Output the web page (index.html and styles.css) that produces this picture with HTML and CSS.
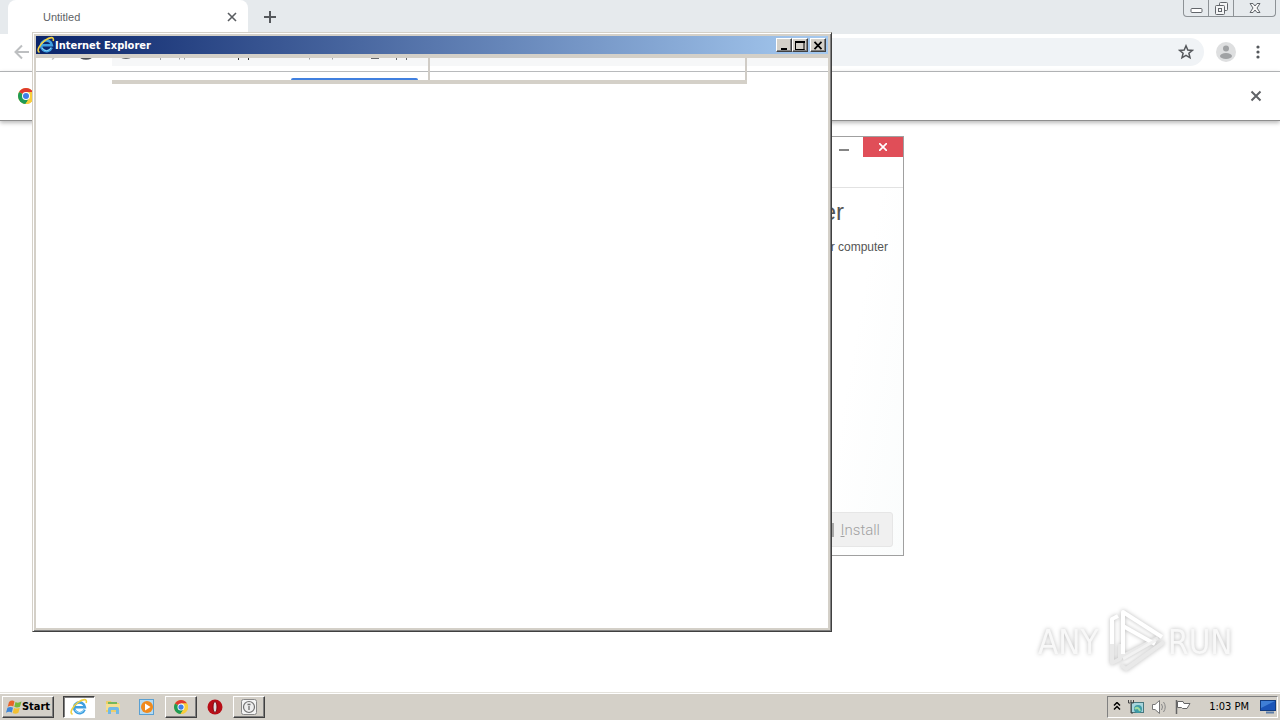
FILE: index.html
```html
<!DOCTYPE html>
<html lang="en">
<head>
<meta charset="utf-8">
<title>Desktop</title>
<link rel="stylesheet" href="styles.css">
</head>
<body>
<svg class="defs" aria-hidden="true">
  <symbol id="chrome" viewBox="0 0 16 16">
    <circle cx="8" cy="8" r="8" fill="#f8ce3c"/>
    <path d="M8 8L1.1 4A8 8 0 0 1 14.9 4H8Z" fill="#df3a30"/>
    <path d="M1.1 4A8 8 0 0 0 7.5 16L11.4 10L8 8Z" fill="#1e9b55"/>
    <path d="M8 4H14.9A8 8 0 0 1 7.5 16L11.4 10Z" fill="#f8ce3c"/>
    <circle cx="8" cy="8" r="4" fill="#fff"/>
    <circle cx="8" cy="8" r="3" fill="#3f7fe8"/>
  </symbol>
  <symbol id="ie" viewBox="0 0 18 18">
    <path d="M14.6 11.6A5.400 5.400 0 1 1 14.9 9.300H4.800" fill="none" stroke="#3f9fe0" stroke-width="2.600"/>
    <path d="M14 11.8A5 5 0 0 1 5 12" fill="none" stroke="#8cd2f6" stroke-width="1"/>
    <path d="M2.600 16.200C-1 15.500 2.200 8.500 8 4.300C12.500 1 17.600.2 16.200 5" fill="none" stroke="#f0d040" stroke-width="1.600"/>
  </symbol>
</svg>

<main class="desktop">
  <section class="browser">
    <header class="tabstrip">
      <div class="tab">
        <span class="tab-title">Untitled</span>
        <button class="plain tab-close" aria-label="Close tab"><svg width="10" height="10" viewBox="0 0 10 10"><path d="M1 1L9 9M9 1L1 9" stroke="#5a5d61" stroke-width="1.6"/></svg></button>
      </div>
      <button class="plain new-tab" aria-label="New tab"><svg width="12" height="12" viewBox="0 0 12 12"><path d="M6 0V12M0 6H12" stroke="#55585c" stroke-width="2"/></svg></button>
      <div class="caption">
        <button class="cap" aria-label="Minimize"><svg width="13" height="17" viewBox="0 0 13 17"><rect x="1" y="8.500" width="11" height="4" rx="1" fill="#fff" stroke="#62666b"/></svg></button>
        <button class="cap" aria-label="Restore"><svg width="13" height="17" viewBox="0 0 13 17"><g fill="#f4f5f6" stroke="#62666b"><rect x="4.500" y="2.500" width="8" height="8" rx="1"/><rect x=".5" y="5.500" width="9" height="9" rx="1"/><rect x="3.500" y="8.500" width="3" height="3"/></g></svg></button>
        <button class="cap cap-close" aria-label="Close"><svg width="12" height="17" viewBox="0 0 12 17"><path d="M1 3.500H4L6 6L8 3.500H11L8 8L11 12.500H8L6 10L4 12.500H1L4 8Z" fill="#f8f8f8" stroke="#62666b"/></svg></button>
      </div>
    </header>
    <div class="toolbar">
      <button class="plain" aria-label="Back"><svg width="16" height="16" viewBox="0 0 16 16"><path d="M15 8H2M8 1.500L1.500 8L8 14.500" fill="none" stroke="#bdbfc1" stroke-width="2"/></svg></button>
      <div class="omnibox">
        <button class="plain" aria-label="Bookmark"><svg width="16" height="16" viewBox="0 0 16 16"><path d="M8 1.800L9.800 6L14.300 6.400L10.900 9.300L12 13.800L8 11.400L4 13.800L5.100 9.300L1.700 6.400L6.200 6Z" fill="none" stroke="#55585c" stroke-width="1.500"/></svg></button>
      </div>
      <button class="plain" aria-label="Profile"><svg width="20" height="20" viewBox="0 0 20 20"><circle cx="10" cy="10" r="10" fill="#dedfe0"/><circle cx="10" cy="6.500" r="3" fill="#a0a2a4"/><ellipse cx="10" cy="14" rx="6" ry="3" fill="#a0a2a4"/></svg></button>
      <button class="plain menu" aria-label="Menu"><svg width="4" height="14" viewBox="0 0 4 14"><g fill="#55585c"><circle cx="2" cy="2" r="1.600"/><circle cx="2" cy="7" r="1.600"/><circle cx="2" cy="12" r="1.600"/></g></svg></button>
    </div>
    <div class="infobar">
      <svg width="16" height="16"><use href="#chrome"/></svg>
      <button class="plain" aria-label="Dismiss"><svg width="12" height="12" viewBox="0 0 12 12"><path d="M1.500 1.500L10.500 10.500M10.500 1.500L1.500 10.500" stroke="#606367" stroke-width="2"/></svg></button>
    </div>
  </section>

  <section class="installer">
    <header class="inst-bar">
      <button class="plain inst-min" aria-label="Minimize"><svg width="10" height="3"><rect y="0" width="10" height="2" fill="#858585"/></svg></button>
      <button class="plain inst-close" aria-label="Close"><svg width="8" height="8" viewBox="0 0 8 8"><path d="M0 0L8 8M8 0L0 8" stroke="#fff" stroke-width="1.700"/></svg></button>
    </header>
    <div class="inst-body">
      <h1 class="inst-title">er</h1>
      <p class="inst-text">r computer</p>
      <button class="install"><span class="shield"></span><span><u>I</u>nstall</span></button>
    </div>
  </section>

  <section class="ie">
    <header class="ie-title">
      <svg class="ie-icon" width="18" height="18"><use href="#ie"/></svg>
      <h2 class="ie-name">Internet Explorer</h2>
      <div class="ie-buttons">
        <button class="classic" aria-label="Minimize"><svg width="10" height="9"><path d="M2 8H8" stroke="#000" stroke-width="2"/></svg></button>
        <button class="classic" aria-label="Maximize"><svg width="10" height="9"><path d="M.5 1H9.500M.5 8.500H9.500M.5 0V9M9 0V9" stroke="#000" stroke-width="1"/><path d="M0 1H10" stroke="#000" stroke-width="2"/></svg></button>
        <button class="classic ie-close" aria-label="Close"><svg width="10" height="9"><path d="M1.500 .8L8.500 8.200M8.500 .8L1.500 8.200" stroke="#000" stroke-width="1.700"/></svg></button>
      </div>
    </header>
    <div class="ie-page">
      <div class="remnant-bar">
        <svg class="remnant-marks" width="430" height="4" viewBox="36 58 430 4">
          <path d="M52 59.500L54 58" stroke="#c4c4c4" stroke-width="1.500"/>
          <path d="M81 57.500Q86 60 91 57.500" fill="none" stroke="#4d5054" stroke-width="2"/>
          <path d="M122 57.500Q126 59 130 57.500" fill="none" stroke="#6a6d70" stroke-width="1.500"/>
          <path d="M160.500 58V60M179.500 58V59.500M184.500 58V59.500M309.500 58V59.500M332.500 58V59.500" stroke="#a0a2a5"/>
          <path d="M238.500 58V60M248.500 58V60" stroke="#333"/>
          <path d="M371 58.500H379M396.500 58V60M406.500 58V60" stroke="#66686c"/>
        </svg>
      </div>
      <div class="remnant-panes">
        <div class="pane pane-left"><span class="blue"></span></div>
        <div class="pane"></div>
      </div>
    </div>
  </section>

  <svg class="watermark" width="206" height="70" viewBox="0 0 206 70" role="img" aria-label="ANY RUN">
    <g fill="none" stroke-linejoin="round">
      <path d="M80 38V59L88 55V40M91 40V52L126 34M89 61L94 65L132 38" stroke="#e9e9e9" stroke-width="4"/>
      <path d="M80 40V15L86 12M91 50V8L130 33M91 22L123 40" stroke="#fff" stroke-width="4"/>
      <path d="M91 55L124 36" stroke="#f2f2f2" stroke-width="3"/>
    </g>
    <g class="mark-text"><text x="6" y="50">ANY</text><text x="136" y="50">RUN</text></g>
  </svg>
</main>

<footer class="taskbar">
  <button class="task start"><svg width="16" height="16" viewBox="0 0 16 16"><path d="M3 3Q6 .5 8.500 2.500L7.300 7.500Q5 6 1.700 7.700Z" fill="#e8642a"/><path d="M9.500 3Q12 4.500 15.500 2.500L14 7.700Q11 9 8.300 7.800Z" fill="#75b83c"/><path d="M1.400 8.800Q4.500 7.200 7 8.700L5.800 13.500Q3 12 0 13.700Z" fill="#3d86d8"/><path d="M8 9Q11 10.300 13.800 8.800L12.400 13.800Q9.500 15.500 6.700 14Z" fill="#f2c033"/></svg><span>Start</span></button>
  <nav class="tasks">
    <button class="task active" aria-label="Internet Explorer"><svg width="18" height="18"><use href="#ie"/></svg></button>
    <button class="task flat" aria-label="Explorer"><svg width="18" height="18" viewBox="0 0 18 18"><path d="M2 3H7L8 5H15V14H2Z" fill="#edce68"/><path d="M4 4H13V7H4Z" fill="#74b75b"/><path d="M2 6H16V12H2Z" fill="#f5df91"/><path d="M4 16V11Q4 9 6 9H13Q15 9 15 11V16H12V12H7V16Z" fill="#70b9e7"/></svg></button>
    <button class="task flat" aria-label="Media Player"><svg width="18" height="18" viewBox="0 0 18 18"><rect x="1.500" y="1.500" width="14" height="15" fill="#b5dbf2" stroke="#5aa0d2"/><circle cx="9" cy="9" r="6" fill="#f08a1d"/><path d="M7 5.500L12.500 9L7 12.500Z" fill="#fff"/></svg></button>
    <button class="task" aria-label="Chrome"><svg width="14" height="14"><use href="#chrome"/></svg></button>
    <button class="task flat" aria-label="Opera"><svg width="16" height="16" viewBox="0 0 16 16"><circle cx="8" cy="8" r="7.500" fill="#b80e17"/><ellipse cx="8" cy="8" rx="2" ry="5.500" fill="#ddd" stroke="#7e080f"/></svg></button>
    <button class="task" aria-label="Installer"><svg width="16" height="16" viewBox="0 0 16 16"><rect x=".5" y=".5" width="15" height="15" rx="2" fill="#f4f4f4" stroke="#888"/><circle cx="8" cy="8" r="5.500" fill="#eee" stroke="#707070" stroke-width="1.200"/><path d="M8 7V11M6.500 5.500H9.500" stroke="#707070" stroke-width="1.300"/></svg></button>
  </nav>
  <div class="tray">
    <svg width="8" height="10" viewBox="0 0 8 10"><path d="M1 3.500L4 .5L7 3.500M1 7.500L4 4.500L7 7.500" fill="none" stroke="#000" stroke-width="1.500"/></svg>
    <svg width="18" height="16" viewBox="0 0 18 16"><rect x="4.500" y="3.500" width="12" height="10" fill="#a7d5dd" stroke="#47777e"/><circle cx="11" cy="10" r="4" fill="#3f9ba6"/><path d="M8 10Q11 7 13 12" stroke="#9ddca0" fill="none" stroke-width="2"/><path d="M1.500 1V4H6.500V1M4 1V4M4 5V14H6" fill="none" stroke="#454545"/></svg>
    <svg width="18" height="16" viewBox="0 0 18 16"><path d="M1.500 5.500H4L8.500 1.500V14.500L4 10.500H1.500Z" fill="#fff" stroke="#777"/><path d="M10.500 5Q12.500 8 10.500 11M12.500 3Q16 8 12.500 13" fill="none" stroke="#888"/></svg>
    <svg width="16" height="16" viewBox="0 0 16 16"><path d="M1.500 1V15" stroke="#666" stroke-width="1.500"/><path d="M2.500 2.500H8L9 4.500H15L12 9.500H7.500L6.500 8.500H2.500Z" fill="#fff" stroke="#666"/></svg>
    <time class="clock">1:03 PM</time>
    <svg width="16" height="14" viewBox="0 0 16 14"><rect x=".5" y=".5" width="15" height="10" fill="#1b55b8" stroke="#123c80"/><path d="M1 1H15L1 8Z" fill="#3f7fd6"/><path d="M6 12.500H14" stroke="#5b7ca8" stroke-width="2"/></svg>
  </div>
</footer>
</body>
</html>
```

FILE: styles.css
```css
* { box-sizing: border-box; }
body {
  margin: 0;
  height: 100vh;
  display: flex;
  flex-direction: column;
  overflow: hidden;
  background: #fff;
  font-family: "DejaVu Sans Condensed", "DejaVu Sans", sans-serif;
  font-size: 11px;
}
.defs { position: absolute; width: 0; height: 0; }
svg { display: block; flex: none; }
h1, h2, p { margin: 0; font-weight: normal; }
button { font: inherit; color: inherit; padding: 0; }
.plain { border: 0; background: none; display: flex; align-items: center; justify-content: center; }

.desktop { position: relative; flex: 1; min-height: 0; }

.tabstrip { display: flex; align-items: center; height: 34px; padding-left: 8px; background: #e6eaed; }
.tab {
  width: 240px;
  height: 34px;
  padding: 0 11px 0 35px;
  display: flex;
  align-items: center;
  justify-content: space-between;
  background: #fff;
  border-radius: 8px 8px 0 0;
  color: #606366;
  font-family: "Liberation Sans", Arial, sans-serif;
}
.new-tab { width: 24px; height: 24px; margin-left: 10px; }
.caption {
  display: flex;
  align-self: flex-start;
  height: 17px;
  margin: 0 4px 0 auto;
  border: 1px solid #8d9296;
  border-top: 0;
  border-radius: 0 0 4px 4px;
}
.cap { width: 25px; border: 0; border-right: 1px solid #8d9296; background: none; display: flex; justify-content: center; }
.cap-close { width: 41px; border-right: 0; }

.toolbar { display: flex; align-items: center; height: 37px; padding: 0 20px 2px 14px; gap: 12px; }
.omnibox {
  flex: 1;
  height: 28px;
  margin-left: 70px;
  padding-right: 10px;
  border-radius: 14px;
  background: #f0f3f6;
  display: flex;
  align-items: center;
  justify-content: flex-end;
}
.menu { margin-left: 8px; }
.infobar {
  display: flex;
  align-items: center;
  justify-content: space-between;
  height: 50px;
  padding: 0 18px;
  border-top: 1px solid #b0b2b4;
  border-bottom: 1px solid #8e8e8e;
  box-shadow: 0 2px 4px #bbb;
}

.installer {
  position: absolute;
  left: 604px;
  top: 136px;
  width: 300px;
  height: 420px;
  display: flex;
  flex-direction: column;
  border: 1px solid #a0a0a0;
  background: #fff;
  font-family: "Liberation Sans", Arial, sans-serif;
  color: #555;
}
.inst-bar { display: flex; justify-content: flex-end; height: 51px; border-bottom: 1px solid #e2e2e2; }
.inst-min { height: 26px; padding-right: 14px; }
.inst-close { width: 40px; height: 20px; background: #e04e58; }
.inst-body {
  flex: 1;
  display: flex;
  flex-direction: column;
  align-items: flex-end;
  padding: 10px 10px 8px;
  background: linear-gradient(100deg, #fff 76%, #fafcfc);
}
.inst-title { padding-right: 49px; font-size: 24px; line-height: 28px; }
.inst-text { padding: 13px 5px 0 0; font-size: 12px; line-height: 16px; }
.install {
  width: 120px;
  height: 35px;
  margin-top: auto;
  padding-right: 12px;
  display: flex;
  align-items: center;
  justify-content: flex-end;
  gap: 7px;
  border: 1px solid #e6e6e6;
  border-radius: 3px;
  background: #f0f0f0;
  color: #a0a0a0;
  font: 300 15px Roboto, sans-serif;
}
.shield { width: 14px; height: 14px; border: 2px solid #a8a8a8; }

.ie {
  position: absolute;
  left: 32px;
  top: 32px;
  width: 800px;
  height: 600px;
  display: flex;
  flex-direction: column;
  padding: 2px;
  border: 1px solid;
  border-color: #d4d0c8 #404040 #404040 #d4d0c8;
  box-shadow: inset 1px 1px #fff, inset -1px -1px #808080;
  background: #d4d0c8;
}
.ie-title {
  display: flex;
  align-items: center;
  height: 18px;
  margin: 1px 1px 0;
  padding: 0 2px 0 1px;
  background: linear-gradient(90deg, #0a246a, #a6caf0);
}
.ie-name { color: #fff; font-weight: bold; font-size: 11px; }
.ie-buttons { display: flex; margin-left: auto; }
.classic {
  width: 16px;
  height: 14px;
  display: flex;
  align-items: center;
  justify-content: center;
  border: 1px solid;
  border-color: #fff #404040 #404040 #fff;
  box-shadow: inset -1px -1px #808080;
  background: #d4d0c8;
}
.ie-close { margin-left: 2px; }
.ie-page { flex: 1; margin: 4px 1px 1px; background: #fff; overflow: hidden; }
.remnant-bar { height: 14px; border-bottom: 1px solid #b8babc; background: linear-gradient(#f6f7f8 8px, #fff 8px) 76px 0 no-repeat; }
.remnant-panes {
  display: grid;
  grid-template-columns: 1fr 1fr;
  width: 635px;
  height: 26px;
  margin: -14px 0 0 76px;
  border-bottom: 4px solid #d4d0c8;
}
.pane { border-right: 2px solid #d0ccc6; }
.pane-left { display: flex; align-items: flex-end; justify-content: flex-end; padding-right: 10px; }
.blue { width: 127px; height: 2px; border-radius: 2px 2px 0 0; background: #4080e0; }

.watermark { position: absolute; right: 42px; bottom: 18px; filter: drop-shadow(0 0 2px #bbb); }
.mark-text { font: 33px "DejaVu Sans Condensed", "DejaVu Sans", sans-serif; fill: #f8f8f8; }

.taskbar {
  display: flex;
  align-items: center;
  height: 28px;
  padding: 2px 2px 2px;
  background: #d4d0c8;
  border-top: 1px solid #e4e2dc;
  box-shadow: inset 0 1px #fff;
}
.task {
  width: 32px;
  height: 22px;
  display: flex;
  align-items: center;
  justify-content: center;
  border: 1px solid;
  border-color: #fff #404040 #404040 #fff;
  box-shadow: inset -1px -1px #808080;
  background: #d4d0c8;
}
.start { width: 52px; font-weight: bold; font-size: 11px; }
.tasks { display: flex; gap: 2px; margin-left: 9px; }
.active { border-color: #404040 #fff #fff #404040; box-shadow: inset 1px 1px #808080; background: #fff; }
.flat { border-color: transparent; box-shadow: none; background: none; }
.tray {
  display: flex;
  align-items: center;
  gap: 6px;
  height: 22px;
  margin-left: auto;
  padding: 0 1px 0 5px;
  border: 1px solid;
  border-color: #808080 #fff #fff #808080;
}
.clock { margin: 0 5px 0 12px; }
```
